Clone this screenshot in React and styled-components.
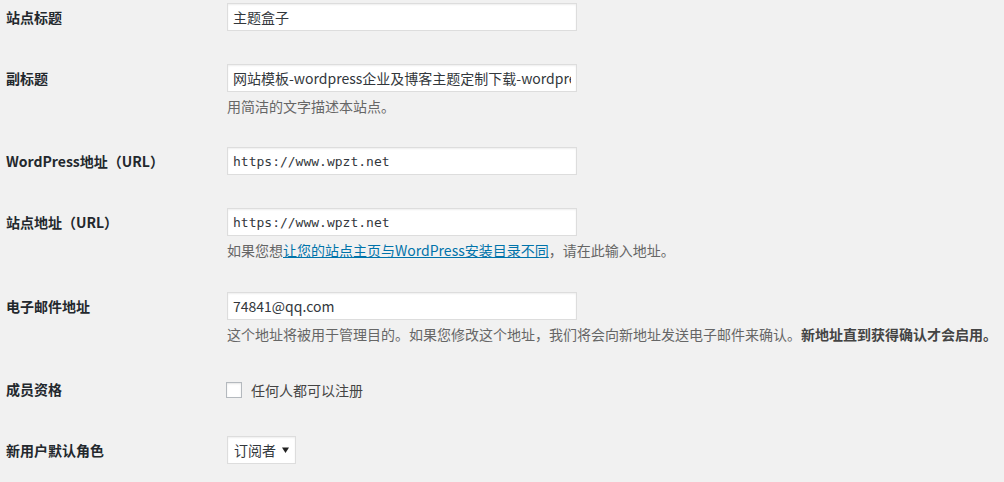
import React from 'react';
import styled, { createGlobalStyle } from 'styled-components';

const GlobalStyle = createGlobalStyle`
  body {
    margin: 0;
    background: #f1f1f1;
    color: #444;
    font-family: "Noto Sans CJK SC", "Noto Sans", sans-serif;
    font-size: 14px;
    overflow: hidden;
  }
`;

// the settings screen is scrolled a little, so the first row starts above the fold
const Form = styled.div`
  margin-top: -13px;
  padding-left: 6px;
`;

const Row = styled.div`
  display: flex;
  align-items: flex-start;
`;

const Label = styled.div`
  width: 221px;
  flex: none;
  padding: ${(p) => p.$top || 15}px 0 15px;
  line-height: 31px;
  font-weight: 600;
  color: #23282d;
`;

const Field = styled.div`
  padding: ${(p) => p.$pad || '15px 0'};
  min-width: 0;
`;

const TextInput = styled.input`
  display: block;
  box-sizing: border-box;
  width: 350px;
  height: 28px;
  margin: 1px 0;
  padding: 3px 5px;
  border: 1px solid #ddd;
  border-radius: 0;
  background: #fff;
  box-shadow: inset 0 1px 2px rgba(0, 0, 0, 0.07);
  color: #32373c;
  font-family: ${(p) => (p.$mono
    ? '"DejaVu Sans Mono", "Liberation Mono", monospace'
    : '"Noto Sans CJK SC", "Noto Sans", sans-serif')};
  font-size: ${(p) => (p.$mono ? '13px' : '14px')};
  outline: none;
`;

const Description = styled.p`
  margin: 4px 0 0;
  line-height: 20px;
  color: #666;
  white-space: nowrap;

  a {
    color: #0073aa;
    text-decoration: underline;
  }

  strong {
    font-weight: 600;
    color: #444;
  }
`;

const CheckLabel = styled.label`
  display: flex;
  align-items: center;
  height: 31px;
  color: #444;
`;

const Box = styled.span`
  box-sizing: border-box;
  width: 16px;
  height: 16px;
  margin: 0 9px 0 -1px;
  border: 1px solid #b4b9be;
  background: #fff;
  box-shadow: inset 0 1px 2px rgba(0, 0, 0, 0.1);
`;

const SelectBox = styled.div`
  box-sizing: border-box;
  display: flex;
  align-items: center;
  width: 69px;
  height: 28px;
  margin: 1px 0;
  padding: 0 6px;
  border: 1px solid #ddd;
  background: #fff;
  box-shadow: inset 0 1px 2px rgba(0, 0, 0, 0.07);
  color: #32373c;
`;

const Arrow = styled.svg`
  margin-left: auto;
  flex: none;
`;

const App = () => (
  <>
    <GlobalStyle />
    <Form>
      <Row>
        <Label>站点标题</Label>
        <Field>
          <TextInput readOnly value="主题盒子" />
        </Field>
      </Row>
      <Row>
        <Label>副标题</Label>
        <Field>
          <TextInput readOnly value="网站模板-wordpress企业及博客主题定制下载-wordpress主题盒子" />
          <Description>用简洁的文字描述本站点。</Description>
        </Field>
      </Row>
      <Row>
        <Label>WordPress地址（URL）</Label>
        <Field>
          <TextInput $mono readOnly value="https://www.wpzt.net" />
        </Field>
      </Row>
      <Row>
        <Label>站点地址（URL）</Label>
        <Field $pad="15px 0 16px">
          <TextInput $mono readOnly value="https://www.wpzt.net" />
          <Description>
            如果您想
            <a href="#home">让您的站点主页与WordPress安装目录不同</a>
            ，请在此输入地址。
          </Description>
        </Field>
      </Row>
      <Row>
        <Label>电子邮件地址</Label>
        <Field>
          <TextInput readOnly value="74841@qq.com" />
          <Description>
            这个地址将被用于管理目的。如果您修改这个地址，我们将会向新地址发送电子邮件来确认。
            <strong>新地址直到获得确认才会启用。</strong>
          </Description>
        </Field>
      </Row>
      <Row>
        <Label $top={15}>成员资格</Label>
        <Field $pad="15px 0">
          <CheckLabel>
            <Box />
            任何人都可以注册
          </CheckLabel>
        </Field>
      </Row>
      <Row>
        <Label>新用户默认角色</Label>
        <Field>
          <SelectBox>
            订阅者
            <Arrow width="7" height="6" viewBox="0 0 7 6">
              <path d="M0 0.5h7L3.5 6z" fill="#222" />
            </Arrow>
          </SelectBox>
        </Field>
      </Row>
    </Form>
  </>
);

export default App;
